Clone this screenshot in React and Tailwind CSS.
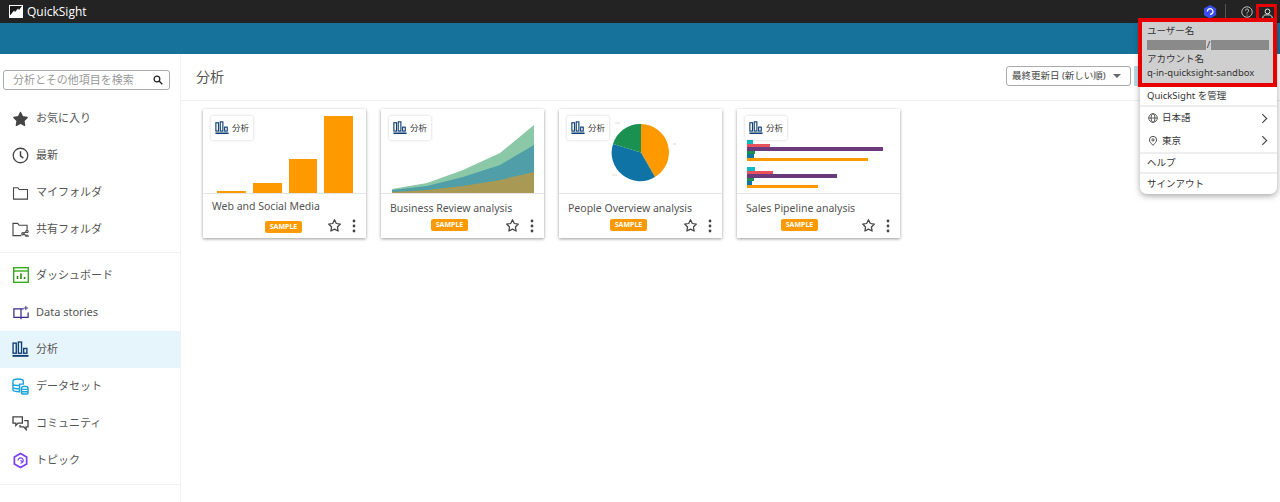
const AnalysisIcon = ({ className = "" }) => (
  <svg viewBox="0 0 16 16" className={className} fill="none" stroke="#0f3f73" strokeWidth="1.3">
    <rect x="1" y="2" width="3" height="9.500" /><rect x="6" y="1" width="3" height="10.500" /><rect x="11" y="7" width="3" height="4.500" />
    <path d="M0.500 14h15" strokeWidth="1.800" />
  </svg>
);
const Star = ({ fill = "none", className = "" }) => (
  <svg viewBox="0 0 24 24" className={className} fill={fill} stroke="#444" strokeWidth="2" strokeLinejoin="round">
    <path d="M12 2.800l2.900 6 6.500.9-4.700 4.600 1.100 6.600L12 17.800l-5.800 3.100 1.100-6.600L2.600 9.700l6.500-.9z" />
  </svg>
);
const icons = {
  star: <Star fill="#444" className="w-[18px] h-[18px]" />,
  clock: <svg viewBox="0 0 18 18" className="w-[17px] h-[17px]" fill="none" stroke="#444" strokeWidth="1.400"><circle cx="9" cy="9" r="7.700" /><path d="M9 4.500V9.500l3 2.200" strokeWidth="1.600" /></svg>,
  folder: <svg viewBox="0 0 18 16" className="w-[17px] h-[14px]" fill="none" stroke="#444" strokeWidth="1.200"><path d="M1 2h5l1.500 2H17v11H1z" /></svg>,
  shared: <svg viewBox="0 0 18 16" className="w-[17px] h-[15px]" fill="none" stroke="#444" strokeWidth="1.200"><path d="M10 14.500H1V1.500h5l1.500 2H16v5" /><circle cx="16" cy="10" r="1.200" /><circle cx="11.500" cy="12.500" r="1.200" /><circle cx="16" cy="15" r="1.200" /><path d="M12.500 12l2.500-1.500M12.500 13l2.500 1.500" /></svg>,
  dash: <svg viewBox="0 0 16 16" className="w-[16px] h-[16px]" fill="none"><rect x=".7" y=".7" width="14.600" height="14.600" stroke="#3aaa1e" strokeWidth="1.400" /><path d="M1 4h14" stroke="#3aaa1e" strokeWidth="1.400" /><path d="M4.500 12V9M8 12V6.500M11.500 12v-2" stroke="#1d8102" strokeWidth="1.500" /></svg>,
  story: <svg viewBox="0 0 18 16" className="w-[16px] h-[15px]" fill="none" stroke="#3b2a8c" strokeWidth="1.400"><path d="M9 4H1v9.500h16V8M12 4H9v11.500" /><path d="M14.500 .5v5M12 3h5" strokeWidth="1" /></svg>,
  data: <svg viewBox="0 0 18 18" className="w-[17px] h-[17px]" fill="none" stroke="#1aa5dc" strokeWidth="1.500"><path d="M1 3.500C1 2 3 1 6.500 1S12 2 12 3.500v3H8v8c-4 0-7-.5-7-2z" /><path d="M1 7c2 1 5 1 7 .8M1 10.500c2 1 5 1 7 .8" /><rect x="10" y="9" width="7" height="8" rx="2" /><path d="M10 12h7M10 14.500h7" /></svg>,
  comm: <svg viewBox="0 0 18 16" className="w-[17px] h-[15px]" fill="none" stroke="#444" strokeWidth="1.400"><path d="M1 1h10v6.500H6.500L4 10V7.500H1z" /><path d="M13 5h4v6.500h-2v3l-2.500-3H8.500V9.500" /></svg>,
  topic: <svg viewBox="0 0 18 18" className="w-[17px] h-[17px]" fill="none" stroke="#7a3ff5" strokeWidth="1.800"><path d="M9 1.500l6.500 3.700v7.600L9 16.500l-6.500-3.700V5.200z" /><path d="M6.300 9a2.800 2.800 0 1 1 2.700 2.800" strokeWidth="1.200" /><path d="M9 9l2.500 1.500" strokeWidth="1.400" /></svg>,
};
const nav1 = [["star", "お気に入り"], ["clock", "最新"], ["folder", "マイフォルダ"], ["shared", "共有フォルダ"]];
const nav2 = [["dash", "ダッシュボード"], ["story", "Data stories"], ["analysis", "分析"], ["data", "データセット"], ["comm", "コミュニティ"], ["topic", "トピック"]];

const NavRow = ({ icon, label }) => (
  <div className={`flex items-center pl-[12px] gap-[7px] text-[11px] text-[#555] ${icon === "dash" ? "h-[38px]" : "h-[37px]"} ${icon === "analysis" ? "bg-[#e6f4fb]" : ""}`}>
    <span className="w-[17px] flex justify-center">{icon === "analysis" ? <AnalysisIcon className="w-[17px] h-[17px]" /> : icons[icon]}</span>
    <span>{label}</span>
  </div>
);

const BarChart = () => (
  <div className="h-full flex items-end gap-[7px] pl-[14px] pr-[13px]">
    {[2, 10, 34, 77].map((h) => <div key={h} className="w-[29px] bg-[#ff9900]" style={{ height: h }} />)}
  </div>
);
const AreaChart = () => (
  <svg viewBox="0 0 163 84" className="w-full h-full">
    <path d="M11 80L46 74 82 61 119 44 153 16V84H11z" fill="#8ac8a8" />
    <path d="M11 81L46 77 82 68 119 56 153 36V84H11z" fill="#4f9ea8" />
    <path d="M11 83L46 81 82 77 119 71 153 63V84H11z" fill="#a89a55" />
  </svg>
);
const PieChart = () => (
  <svg viewBox="0 0 163 84" className="w-full h-full">
    <path d="M82 43.500V15A28.500 28.500 0 0 1 96 68z" fill="#ff9900" />
    <path d="M82 43.500L96 68A28.500 28.500 0 0 1 54 35z" fill="#0f73a6" />
    <path d="M82 43.500L54 35A28.500 28.500 0 0 1 82 15z" fill="#1a9150" />
    <path d="M114 35h3M56 14h5M53 66h5" stroke="#ddd" strokeWidth="1" />
  </svg>
);
const HBarChart = () => (
  <div className="h-full flex flex-col pl-[10px] pt-[6px]">
    <div className="w-[2px] h-[2px] bg-[#14b8c4] mb-[25px]" />
    {[[[6, "#14b8c4"], [23, "#e8505b"], [136, "#6b3a7d"], [8, "#1a9150"], [7, "#0f73a6"], [121, "#ff9900"]], [[8, "#14b8c4"], [26, "#e8505b"], [90, "#6b3a7d"], [7, "#1a9150"], [5, "#0f73a6"], [71, "#ff9900"]]].map((g, i) => (
      <div key={i} className="flex flex-col mb-[6px]">
        {g.map(([w, c], j) => <div key={j} className="h-[3.500px]" style={{ width: w, background: c }} />)}
      </div>
    ))}
  </div>
);

const Card = ({ title, chart, titleTop, badgeTop, badgeMl }) => (
  <div className="relative w-[163px] h-[129px] bg-white shadow-[0_1px_3px_rgba(0,0,0,0.4)] flex flex-col">
    <div className="h-[85px] border-b border-[#e5e5e5] shrink-0">{chart}</div>
    <div className="absolute left-[8px] top-[7px] w-[42px] h-[24px] bg-white shadow-[0_0_3px_rgba(0,0,0,0.2)] rounded-[2px] flex items-center justify-center gap-[3px] text-[8.500px] text-[#333]">
      <AnalysisIcon className="w-[14px] h-[14px] shrink-0" /><span>分析</span>
    </div>
    <div className="pl-[9px] text-[10.500px] text-[#555] whitespace-nowrap leading-[14px] font-['Noto_Sans','Noto_Sans_CJK_JP',sans-serif]" style={{ marginTop: titleTop }}>{title}</div>
    <div className="flex items-center h-[16px]" style={{ marginTop: badgeTop }}>
      <span className="h-[12px] w-[37px] rounded-[2px] bg-[#ff9900] text-white text-[7px] font-bold flex items-center justify-center" style={{ marginLeft: badgeMl }}>SAMPLE</span>
    </div>
    <div className="absolute right-[10px] bottom-[5px] flex items-center gap-[10px]">
      <Star className="w-[15px] h-[15px]" />
      <svg viewBox="0 0 4 14" className="w-[4px] h-[14px]" fill="#444"><circle cx="2" cy="2" r="1.400" /><circle cx="2" cy="7" r="1.400" /><circle cx="2" cy="12" r="1.400" /></svg>
    </div>
  </div>
);

const Chevron = () => <svg viewBox="0 0 8 12" className="w-[7px] h-[11px]" fill="none" stroke="#444" strokeWidth="1.300"><path d="M1.500 1l5 5-5 5" /></svg>;

export default function App() {
  return (
    <div className="relative w-[1280px] h-[502px] overflow-hidden bg-white font-['Noto_Sans','Noto_Sans_CJK_JP',sans-serif]">
      <header className="h-[23px] bg-[#232323] flex items-center pl-[9px] pr-[3px] text-white">
        <svg viewBox="0 0 14 13" className="w-[14px] h-[13px]"><rect width="14" height="13" fill="#fff" /><path d="M1 1h12L10 5 9 3.500 6 7 5 5.500 1.500 10H1z" fill="#181818" /></svg>
        <span className="ml-[4px] text-[12px] font-['Open_Sans','Noto_Sans',sans-serif]">QuickSight</span>
        <div className="ml-auto flex items-center">
          <svg viewBox="0 0 16 16" className="w-[14px] h-[15px] mr-[8px]"><path d="M8 .500l7 4v7.500l-7 4-7-4V4.500z" fill="#3b4ff0" /><path d="M5 8a3.200 3.200 0 1 1 3 3.200" fill="none" stroke="#fff" strokeWidth="1.500" /></svg>
          <div className="w-px h-[16px] bg-[#555] mr-[15px]" />
          <svg viewBox="0 0 16 16" className="w-[12px] h-[12px] mr-[3px]" fill="none" stroke="#ccc" strokeWidth="1.200"><circle cx="8" cy="8" r="7" /><path d="M5.800 6.200a2.200 2.200 0 1 1 3.300 1.900c-.8.500-1.100.9-1.100 1.900M8 11.500v1.300" /></svg>
          <div className="w-[21px] h-[15px] border-[3px] border-b-0 border-[#e60000] flex items-center justify-center pl-[2px]">
            <svg viewBox="0 0 16 16" className="w-[11px] h-[11px]" fill="none" stroke="#eee" strokeWidth="1.400"><circle cx="8" cy="5" r="3.500" /><path d="M1 15c0-3.500 2.500-5 4.500-5h5c2 0 4.500 1.500 4.500 5" /></svg>
          </div>
        </div>
      </header>
      <div className="h-[31px] bg-[#16719b]" />
      <div className="flex h-[448px]">
        <aside className="w-[181px] shrink-0 border-r border-[#f0f0f0] flex flex-col">
          <div className="mt-[16px] ml-[3px] w-[167px] h-[20px] border border-[#aaa] rounded-[3px] flex items-center pl-[9px] pr-[6px] justify-between">
            <span className="text-[11px] text-[#999] whitespace-nowrap">分析とその他項目を検索</span>
            <svg viewBox="0 0 14 14" className="w-[10px] h-[10px]" fill="none" stroke="#222" strokeWidth="1.800"><circle cx="5.500" cy="5.500" r="4" /><path d="M8.500 8.500L13 13" /></svg>
          </div>
          <div className="mt-[10px] pb-[4px] border-b border-[#f0f0f0]">
            {nav1.map(([i, l]) => <NavRow key={l} icon={i} label={l} />)}
          </div>
          <div className="mt-[3px] pb-[5px] border-b border-[#f0f0f0]">
            {nav2.map(([i, l]) => <NavRow key={l} icon={i} label={l} />)}
          </div>
        </aside>
        <main className="flex-1 min-w-0">
          <div className="h-[47px] border-b border-[#eee] flex items-center pl-[15px] pb-[1px]">
            <h1 className="text-[14px] text-[#555] font-normal">分析</h1>
            <div className="ml-[782px] mt-[-1px] w-[125px] h-[20px] border border-[#aaa] rounded-[3px] flex items-center pl-[5px] pr-[9px] justify-between">
              <span className="text-[9.500px] text-[#444] whitespace-nowrap">最終更新日 (新しい順)</span>
              <span className="w-0 h-0 border-x-[4px] border-x-transparent border-t-[4px] border-t-[#666]" />
            </div>
            <div className="ml-[3px] mt-[-1px] w-[10px] h-[20px] bg-[#b5d9e6]" />
          </div>
          <div className="flex gap-[15px] pl-[22px] pt-[8px]">
            <Card title="Web and Social Media" chart={<BarChart />} titleTop={5} badgeTop={6} badgeMl={62} />
            <Card title="Business Review analysis" chart={<AreaChart />} titleTop={7} badgeTop={2} badgeMl={50} />
            <Card title="People Overview analysis" chart={<PieChart />} titleTop={7} badgeTop={2} badgeMl={51} />
            <Card title="Sales Pipeline analysis" chart={<HBarChart />} titleTop={7} badgeTop={2} badgeMl={44} />
          </div>
        </main>
      </div>

      <div className="absolute left-[1140px] top-[23px] w-[137px] h-[171px] bg-white rounded-b-[7px] shadow-[0_2px_6px_rgba(0,0,0,0.35)] text-[9.500px] text-[#333] flex flex-col">
        <div className="w-[139px] h-[69px] -ml-[2px] -mt-[5px] border-[4px] border-[#e60000] bg-[#cfcfcf] pl-[5px] pt-[2px] flex flex-col leading-[14px] shrink-0">
          <span>ユーザー名</span>
          <div className="flex items-center h-[14px]"><span className="w-[59px] h-[10px] bg-[#8a8a8a]" /><span className="w-[5px] text-center">/</span><span className="w-[58px] h-[10px] bg-[#8a8a8a]" /></div>
          <span>アカウント名</span>
          <span className="whitespace-nowrap">q-in-quicksight-sandbox</span>
        </div>
        <div className="h-[20px] flex items-center pl-[7px] border-b-2 border-[#eee]">QuickSight を管理</div>
        <div className="h-[47px] flex flex-col border-b-2 border-[#eee]">
          <div className="flex-1 flex items-center pl-[8px] pr-[9px] gap-[4px]">
            <svg viewBox="0 0 14 14" className="w-[10px] h-[10px]" fill="none" stroke="#333" strokeWidth="1.100"><circle cx="7" cy="7" r="6" /><ellipse cx="7" cy="7" rx="2.700" ry="6" /><path d="M1 7h12" /></svg>
            <span>日本語</span><span className="ml-auto"><Chevron /></span>
          </div>
          <div className="flex-1 flex items-center pl-[8px] pr-[9px] gap-[4px]">
            <svg viewBox="0 0 14 14" className="w-[10px] h-[10px]" fill="none" stroke="#333" strokeWidth="1.200"><path d="M7 13C4 10 2 8 2 5.500a5 5 0 0 1 10 0C12 8 10 10 7 13z" /><circle cx="7" cy="5.500" r="1.600" /></svg>
            <span>東京</span><span className="ml-auto"><Chevron /></span>
          </div>
        </div>
        <div className="h-[20px] flex items-center pl-[7px] border-b-2 border-[#eee]">ヘルプ</div>
        <div className="h-[20px] flex items-center pl-[7px]">サインアウト</div>
      </div>
    </div>
  );
}
